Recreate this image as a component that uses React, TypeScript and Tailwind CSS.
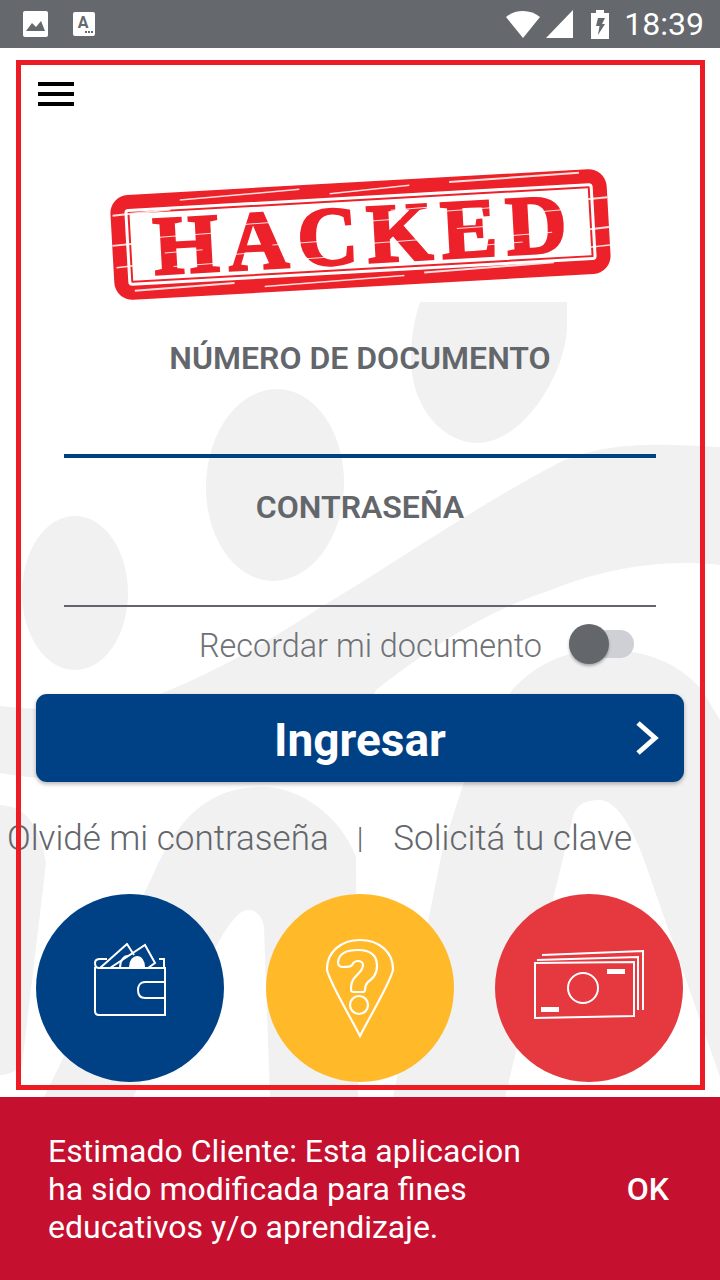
const roboto = "font-['Roboto',sans-serif]";

// streaks that wear the stamp down, [x1, y1, x2, y2, width]
const scratches = [
  [2, 20, 60, 17, 2], [70, 8, 190, 4, 1.5], [220, 10, 300, 6, 1.5], [340, 5, 470, 3, 2],
  [0, 50, 22, 49, 2], [3, 72, 20, 71, 1.5], [474, 30, 497, 29, 2], [478, 60, 497, 59, 2], [476, 78, 497, 77, 1.5],
  [20, 96, 120, 94, 2], [150, 99, 290, 96, 1.5], [310, 94, 440, 91, 2],
  [48, 44, 100, 43, 1], [52, 60, 90, 59, 1], [130, 36, 190, 35, 1], [160, 58, 210, 57, 1],
  [240, 40, 290, 39, 1], [260, 62, 310, 61, 1], [330, 34, 380, 33, 1], [345, 52, 400, 51, 1],
  [400, 62, 440, 61, 1], [420, 40, 455, 39, 1], [60, 74, 110, 73, 1], [180, 74, 230, 73, 1],
  [280, 30, 320, 29, 1], [100, 66, 135, 65, 1], [370, 70, 410, 69, 1],
];

function Watermark() {
  return (
    <svg className="absolute inset-0 h-full w-full" viewBox="0 48 720 1049" fill="#f1f1f2">
      <path d="M420 302C413 325 411 340 411 358C411 410 445 443 477 443C525 443 567 370 567 325L567 302Z" />
      <ellipse cx="275" cy="485" rx="69" ry="96" transform="rotate(2 275 485)" />
      <ellipse cx="75" cy="593" rx="53" ry="77" />
      <path d="M720 447C660 444 600 440 551 467C470 510 400 560 321 607C270 640 220 670 165 692C110 712 60 712 0 706L0 773C40 780 60 778 90 782L340 782L376 690C440 640 490 610 551 590C600 570 660 558 720 565Z" />
      <path d="M512 690C540 660 570 650 606 650C650 650 680 665 702 690L720 720L720 1077L643 857C625 810 610 800 599 800C585 800 578 805 574 813L505 1097L393 1097L443 847L464 782Z" />
      <path d="M152 877C180 810 215 787 262 787C300 787 340 815 356 857L358 1097L270 1097L264 927C262 915 255 910 248 910C238 910 226 928 216 947L133 1097L44 1097Z" />
      <path d="M0 805C25 806 40 825 46 863L22 1065C15 1073 5 1075 0 1075Z" />
    </svg>
  );
}

function Stamp() {
  return (
    <div className="relative h-[105px] w-[497px] -rotate-[3.2deg] rounded-[18px] bg-[#ed2129] p-[14px]">
      <div className="flex h-full w-full items-center justify-center rounded-[4px] border-[3px] border-white bg-white pl-[8px] outline-[2px] -outline-offset-[5px] outline-[#ed2129]">
        <span className="font-['Liberation_Serif',serif] text-[84px] leading-none font-bold tracking-[9px] text-[#ed2129] [-webkit-text-stroke:2.5px_#ed2129]">
          HACKED
        </span>
      </div>
      <svg className="absolute inset-0" width="497" height="105" stroke="#fff">
        {scratches.map(([x1, y1, x2, y2, w], i) => (
          <line key={i} x1={x1} y1={y1} x2={x2} y2={y2} strokeWidth={w} opacity={0.85} />
        ))}
      </svg>
    </div>
  );
}

function WalletIcon() {
  return (
    <svg width="74" height="74" viewBox="0 0 74 74" fill="none" stroke="#fff" strokeWidth="2">
      <path d="M2 24V68C2 71 3 72 6 72H72V25H6C3 25 2 23 2 20C2 17 4 16 7 16H14" />
      <path d="M66 16H71V25" />
      <path d="M7 25L34 1L41 12" />
      <path d="M17 25L52 2L62 20L55 25" />
      <path d="M27 25C27 17 31 13 35 13" />
      <path d="M37 24C37 17 41 14 44 14C48 14 51 18 51 24Z" fill="#fff" />
      <path d="M72 39H52C47 39 45 43 45 47C45 52 47 55 52 55H72" />
    </svg>
  );
}

function PinIcon() {
  return (
    <svg width="70" height="100" viewBox="0 0 70 100" fill="none" stroke="#fff" strokeWidth="2.2">
      <path d="M35 98C25 78 2 40 2 31C2 14 16 2 35 2C54 2 68 14 68 31C68 40 45 78 35 98Z" />
      <path d="M18 29C14 29 13 27 13 24C14 15 22 12 33 12C46 12 52 18 52 28C52 37 47 41 43 44C40 47 40 49 40 52C40 54 39 54 37 54H29C26 54 26 53 26 50C26 43 29 40 33 36C36 33 38 31 38 27C38 24 35 23 33 23C29 23 28 25 27 27C26 29 24 29 18 29Z" />
      <circle cx="34" cy="67" r="9" />
    </svg>
  );
}

function CashIcon() {
  return (
    <svg width="110" height="69" viewBox="0 0 110 69" fill="none" stroke="#fff" strokeWidth="2">
      <path d="M1 13L100 12V66L1 68Z" />
      <path d="M3 10L104 7V60" />
      <path d="M8 5L109 1V60" />
      <circle cx="49" cy="38" r="15" />
      <rect x="73" y="19" width="18" height="5" fill="#fff" stroke="none" />
      <rect x="7" y="57" width="18" height="5" fill="#fff" stroke="none" />
    </svg>
  );
}

export default function App() {
  return (
    <div className={`${roboto} flex h-[1280px] w-[720px] flex-col overflow-hidden bg-white`}>
      {/* status bar */}
      <div className="flex h-12 shrink-0 items-center justify-between bg-[#65686c] pr-[16px] pl-[23px] text-white">
        <div className="flex items-center gap-[25px]">
          <svg width="25" height="26" viewBox="0 0 25 26">
            <rect width="25" height="26" rx="2" fill="#fff" />
            <path d="M3 20L9 12L13 16L18 10L22 20Z" fill="#65686c" />
          </svg>
          <svg width="22" height="24" viewBox="0 0 22 24">
            <rect width="22" height="24" rx="2" fill="#fff" />
            <text x="10" y="16" fontSize="16" fontWeight="700" fill="#65686c" textAnchor="middle">
              A
            </text>
            <path d="M12 19h2v2h-2zM15 19h2v2h-2zM18 19h2v2h-2z" fill="#65686c" />
          </svg>
        </div>
        <div className="flex items-center">
          <svg width="34" height="28" viewBox="0 0 34 28">
            <path d="M0 7C9-1 25-1 34 7L17 28Z" fill="#fff" />
          </svg>
          <svg className="ml-[6px]" width="27" height="28" viewBox="0 0 27 28">
            <path d="M27 0V28H0Z" fill="#fff" />
          </svg>
          <svg className="ml-[18px]" width="18" height="29" viewBox="0 0 18 29">
            <path d="M5 0H13V3H18V29H0V3H5Z" fill="#fff" />
            <path d="M7 8H14L11 14H14L7 25L8.500 16H5Z" fill="#65686c" />
          </svg>
          <span className="ml-[15px] text-[32px] leading-none">18:39</span>
        </div>
      </div>

      {/* login screen */}
      <div className="relative flex h-[1049px] shrink-0 flex-col overflow-hidden">
        <Watermark />
        <div className="relative flex flex-col">
          <div className="mt-[34px] ml-[38px] flex w-[36px] flex-col gap-[6px]">
            <div className="h-[4px] bg-black" />
            <div className="h-[4px] bg-black" />
            <div className="h-[4px] bg-black" />
          </div>

          <div className="mt-[76px] flex justify-center">
            <Stamp />
          </div>

          <div className="mt-[53px] flex flex-col px-[64px] text-center text-[32px] leading-[36px] font-semibold text-[#63666a]">
            <div>NÚMERO DE DOCUMENTO</div>
            <div className="mt-[78px] h-[4px] bg-[#004186]" />
            <div className="mt-[31px]">CONTRASEÑA</div>
            <div className="mt-[80px] h-[2px] bg-[#63666a]" />
          </div>

          <div className="mt-[17px] flex h-[40px] items-center justify-end pr-[86px]">
            <span className="mt-[4px] text-[32.4px] leading-none font-light text-[#6f7175]">Recordar mi documento</span>
            <div className="relative ml-[27px] h-[28px] w-[65px] rounded-full bg-[#cfd0d6]">
              <div className="absolute -top-[6px] left-0 h-[40px] w-[40px] rounded-full bg-[#63666a] shadow-[0_2px_3px_rgba(0,0,0,0.3)]" />
            </div>
          </div>

          <div className="relative mx-[36px] mt-[30px] flex h-[88px] items-center justify-center rounded-[11px] bg-[#004186] shadow-[0_2px_4px_rgba(0,0,0,0.3)]">
            <span className="pt-[4px] text-[46px] leading-none font-bold text-white">Ingresar</span>
            <svg className="absolute top-[26px] right-[24px]" width="26" height="36" viewBox="0 0 26 36" fill="none" stroke="#fff" strokeWidth="5">
              <path d="M4 3L21 18L4 33" />
            </svg>
          </div>

          <div className="mt-[36px] flex h-[40px] items-center text-[35px] leading-none font-light text-[#63666a]">
            <span className="ml-[7px]">Olvidé mi contraseña</span>
            <span className="ml-[28px] text-[30px]">|</span>
            <span className="ml-[30px]">Solicitá tu clave</span>
          </div>

          <div className="mt-[36px] flex justify-between pr-[37px] pl-[36px]">
            <div className="flex h-[188px] w-[188px] items-center justify-center rounded-full bg-[#004186] pb-[16px]">
              <WalletIcon />
            </div>
            <div className="flex h-[188px] w-[188px] items-center justify-center rounded-full bg-[#ffb929]">
              <PinIcon />
            </div>
            <div className="flex h-[188px] w-[188px] items-center justify-center rounded-full bg-[#e5383f] pb-[8px]">
              <CashIcon />
            </div>
          </div>
        </div>

        {/* red frame lying over the screen */}
        <div className="pointer-events-none absolute top-[12px] left-[16px] h-[1030px] w-[689px] border-[5px] border-[#ed1c24]" />
      </div>

      {/* snackbar */}
      <div className="flex flex-1 items-center justify-between bg-[#c5102f] pr-[51px] pl-[48px] text-white">
        <p className="w-[520px] text-[32px] leading-[38px]">
          Estimado Cliente: Esta aplicacion
          <br />
          ha sido modificada para fines
          <br />
          educativos y/o aprendizaje.
        </p>
        <span className="text-[32px] font-medium">OK</span>
      </div>
    </div>
  );
}
